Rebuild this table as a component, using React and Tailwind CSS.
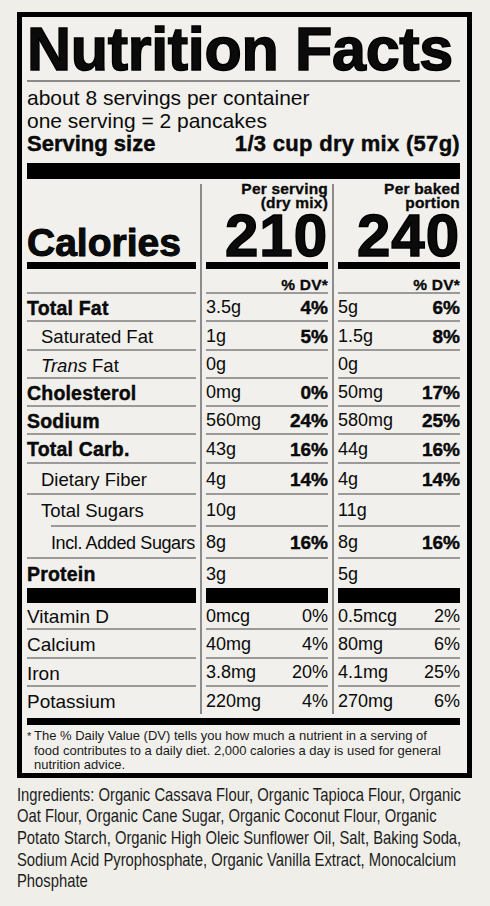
const nutrients = [
  { label: 'Total Fat', bold: true, a: '3.5g', ap: '4%', b: '5g', bp: '6%', h: 'h-[28px]' },
  { label: 'Saturated Fat', indent: 1, a: '1g', ap: '5%', b: '1.5g', bp: '8%', h: 'h-[29px]' },
  { label: 'Trans', trans: true, indent: 1, a: '0g', ap: '', b: '0g', bp: '', h: 'h-[28px]' },
  { label: 'Cholesterol', bold: true, a: '0mg', ap: '0%', b: '50mg', bp: '17%', h: 'h-[28px]' },
  { label: 'Sodium', bold: true, a: '560mg', ap: '24%', b: '580mg', bp: '25%', h: 'h-[28px]' },
  { label: 'Total Carb.', bold: true, a: '43g', ap: '16%', b: '44g', bp: '16%', h: 'h-[29px]' },
  { label: 'Dietary Fiber', indent: 1, a: '4g', ap: '14%', b: '4g', bp: '14%', h: 'h-[31px]' },
  { label: 'Total Sugars', indent: 1, a: '10g', ap: '', b: '11g', bp: '', h: 'h-[32px]', shortLine: true },
  { label: 'Incl. Added Sugars', indent: 2, a: '8g', ap: '16%', b: '8g', bp: '16%', h: 'h-[32px]' },
  { label: 'Protein', bold: true, a: '3g', ap: '', b: '5g', bp: '', h: 'h-[29px]', last: true },
]

const vitamins = [
  { label: 'Vitamin D', a: '0mcg', ap: '0%', b: '0.5mcg', bp: '2%', h: 'h-[27px]' },
  { label: 'Calcium', a: '40mg', ap: '4%', b: '80mg', bp: '6%', h: 'h-[29px]' },
  { label: 'Iron', a: '3.8mg', ap: '20%', b: '4.1mg', bp: '25%', h: 'h-[28px]' },
  { label: 'Potassium', a: '220mg', ap: '4%', b: '270mg', bp: '6%', h: 'h-[27px]', last: true },
]

const line = 'border-b-2 border-[#9a9a9a]'
const headText = 'text-[15.5px] font-bold leading-[14px] tracking-[0.2px] [-webkit-text-stroke:0.3px_#000]'

function LabelCell({ row }) {
  const pad = row.indent === 2 ? 'pl-[24px]' : row.indent === 1 ? 'pl-[14px]' : ''
  const text = row.bold
    ? 'text-[19.5px] font-bold tracking-[0.2px] [-webkit-text-stroke:0.4px_#000]'
    : row.indent === 2
      ? 'text-[18px] tracking-[-0.4px]'
      : 'text-[18.5px]'
  if (row.shortLine) {
    return (
      <div className={`${row.h} flex flex-col`}>
        <div className={`flex-1 flex items-center pt-[2px] whitespace-nowrap ${pad} ${text}`}>{row.label}</div>
        <div className="ml-[24px] h-[2px] bg-[#9a9a9a]" />
      </div>
    )
  }
  return (
    <div className={`${row.h} flex items-center pt-[2px] whitespace-nowrap leading-[19px] ${pad} ${text} ${row.last ? '' : line}`}>
      {row.trans ? (<><i>Trans</i>&nbsp;Fat</>) : row.label}
    </div>
  )
}

function ValueCell({ row, v, p, boldPct }) {
  return (
    <div className={`${row.h} flex items-center justify-between pt-[1px] leading-[19px] ${row.last ? '' : line}`}>
      <span className="text-[18px]">{v}</span>
      <span className={boldPct ? 'text-[19px] font-bold [-webkit-text-stroke:0.4px_#000]' : 'text-[18px]'}>{p}</span>
    </div>
  )
}

function Column({ side }) {
  const isLabel = side === 'label'
  const head = side === 'a' ? ['Per serving', '(dry mix)', '210'] : ['Per baked', 'portion', '240']
  return (
    <div className={`flex flex-col ${isLabel ? 'w-[169px]' : 'w-[122px]'}`}>
      {isLabel ? (
        <div className="h-[80px] flex items-end">
          <span className="text-[39px] font-bold leading-[39px] [-webkit-text-stroke:1px_#000]">Calories</span>
        </div>
      ) : (
        <div className="h-[80px] flex flex-col items-end">
          <span className={headText}>{head[0]}</span>
          <span className={headText}>{head[1]}</span>
          <span className="text-[60px] font-bold leading-[52px] tracking-[1px] [-webkit-text-stroke:1.5px_#000]">{head[2]}</span>
        </div>
      )}
      <div className="h-[7px] bg-black" />
      <div className={`h-[25px] flex items-end justify-end ${line}`}>
        {!isLabel && <span className={headText}>% DV*</span>}
      </div>
      {nutrients.map((row) =>
        isLabel ? (
          <LabelCell key={row.label} row={row} />
        ) : (
          <ValueCell key={row.label} row={row} v={side === 'a' ? row.a : row.b} p={side === 'a' ? row.ap : row.bp} boldPct />
        )
      )}
      <div className="h-[15px] bg-black" />
      {vitamins.map((row) =>
        isLabel ? (
          <div key={row.label} className={`${row.h} flex items-center pt-[2px] text-[19px] leading-[19px] ${row.last ? '' : line}`}>
            {row.label}
          </div>
        ) : (
          <ValueCell key={row.label} row={row} v={side === 'a' ? row.a : row.b} p={side === 'a' ? row.ap : row.bp} />
        )
      )}
    </div>
  )
}

export default function App() {
  return (
    <div className="w-[490px] min-h-[906px] overflow-hidden bg-[#efeee9] pt-[12px] text-[#0b0b0b] font-['Liberation_Sans',Arial,sans-serif]">
      <div className="ml-[17px] w-[455px] border-[5px] border-black bg-[#f1f0ec] pl-[5px] pr-[7px]">
        <div className="pt-[2px]">
          <h1 className="text-[61px] font-bold leading-[61px] tracking-[-0.3px] whitespace-nowrap [-webkit-text-stroke:1.5px_#000]">
            Nutrition Facts
          </h1>
          <div className="h-[2px] bg-[#8a8a8a]" />
        </div>

        <div className="pt-[4px]">
          <p className="text-[21px] leading-[23px]">about 8 servings per container</p>
          <p className="text-[21px] leading-[23px]">one serving = 2 pancakes</p>
          <div className="flex justify-between text-[22px] font-bold leading-[23px] [-webkit-text-stroke:0.4px_#000]">
            <span>Serving size</span>
            <span className="tracking-[0.3px]">1/3 cup dry mix (57g)</span>
          </div>
        </div>

        <div className="mt-[8px] h-[16px] bg-black" />

        <div className="mt-[3px] flex">
          <Column side="label" />
          <div className="mx-[4px] mt-[2px] w-[2px] bg-[#8c8c8c]" />
          <Column side="a" />
          <div className="mx-[4px] mt-[2px] w-[2px] bg-[#8c8c8c]" />
          <Column side="b" />
        </div>

        <div className="mt-[4px] h-[7px] bg-black" />

        <div className="mt-[4px] flex text-[13px] leading-[14.5px] text-[#1a1a1a]">
          <span className="w-[7px] text-[11px]">*</span>
          <p className="whitespace-nowrap">
            The % Daily Value (DV) tells you how much a nutrient in a serving of
            <br />
            food contributes to a daily diet. 2,000 calories a day is used for general
            <br />
            nutrition advice.
          </p>
        </div>
      </div>

      <p className="ml-[17px] mt-[6px] w-fit origin-top-left scale-x-[0.8] whitespace-nowrap text-[18.5px] leading-[21.7px] text-[#1c1c1c]">
        Ingredients: Organic Cassava Flour, Organic Tapioca Flour, Organic
        <br />
        Oat Flour, Organic Cane Sugar, Organic Coconut Flour, Organic
        <br />
        Potato Starch, Organic High Oleic Sunflower Oil, Salt, Baking Soda,
        <br />
        Sodium Acid Pyrophosphate, Organic Vanilla Extract, Monocalcium
        <br />
        Phosphate
      </p>
    </div>
  )
}
